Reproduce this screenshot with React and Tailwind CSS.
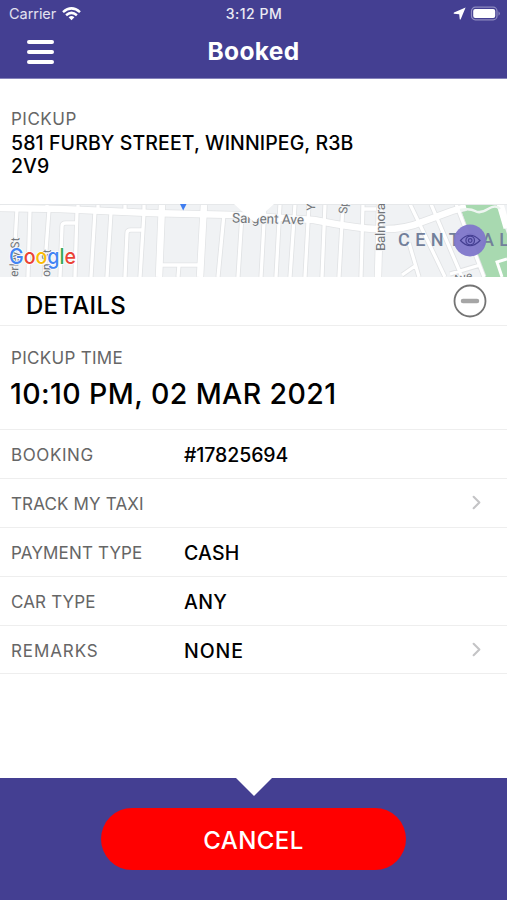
import React from 'react';
import { ChevronRight } from 'lucide-react';

const ROWS = [
    { label: 'BOOKING', value: '#17825694', labelClass: 'tracking-[0.6px]', valueClass: 'tracking-[-0.1px]' },
    { label: 'TRACK MY TAXI', arrow: true, labelClass: 'tracking-[0.15px]' },
    { label: 'PAYMENT TYPE', value: 'CASH', labelClass: 'tracking-[0.15px]', valueClass: 'tracking-[0.2px]' },
    { label: 'CAR TYPE', value: 'ANY', labelClass: 'tracking-[0.15px]', valueClass: 'tracking-[0.3px]' },
    { label: 'REMARKS', value: 'NONE', arrow: true, labelClass: 'tracking-[0.9px]', valueClass: 'tracking-[0.9px]' },
];

// Narrow lanes and side streets
const LANES = [
    'M17 5 L13 73', 'M30 5 L28 73', 'M49 6 L44 73', 'M77 7 L75 73', 'M95 7 L91 73',
    'M111 8 L107 73', 'M144 9 L140 73', 'M224 10 L218 73', 'M242 10 L238 73',
    'M60 73 L62 22 Q62 19 66 19 L76 19', 'M125 73 L127 29 Q127 26 131 26 L142 26',
    'M47 0 V5', 'M78 0 V6', 'M98 0 V7', 'M125 0 V8', 'M144 0 V8',
    'M160 61 H201', 'M179 61 L178 73',
    'M265 0 L261 73', 'M280 0 L276 73', 'M295 0 L290 73', 'M309 0 L305 73',
    'M325 0 L322 73', 'M343 0 L339 73', 'M363 0 L361 73',
    'M363 5 H376', 'M410 0 L445 73', 'M431 0 L462 73', 'M456 0 L484 73',
    'M409 39 L419 73', 'M402 71 L415 62', 'M450 70 L480 61',
];

const MAIN_STREETS = [
    'M162 0 L159 73', 'M204 0 L200 73', 'M380 0 L378 73',
];

const AVENUE = 'M0 4 L60 5 L150 9 L235 11 L314 16 Q360 25 378 25 Q404 26 422 18 L452 7 L466 3';

const Header = () => (
    <header className="h-[79px] bg-[#443f92] text-white shrink-0 border-b border-[#8582ba]">
        <div className="h-[27px] grid grid-cols-3 items-center pl-[9px] pr-[6px] text-[14.5px]">
            <div className="flex items-center gap-[6px] text-white/85">
                <span className="tracking-[-0.05px]">Carrier</span>
                <svg width="19" height="14" viewBox="0 0 19 14" fill="none" stroke="white" strokeWidth="2.5">
                    <path d="M1 5.1 Q9.5 -2.3 18 5.1" />
                    <path d="M4.1 8.2 Q9.5 3.5 14.9 8.2" />
                    <path d="M6.6 10.2 Q9.5 7.9 12.4 10.2 L9.5 13.3 Z" fill="white" stroke="none" />
                </svg>
            </div>
            <span className="-ml-[2px] text-center text-[14px] font-medium tracking-[0.5px] text-white/90 whitespace-nowrap">3:12 PM</span>
            <div className="flex items-center justify-end gap-[4px]">
                <svg width="13" height="13" viewBox="0 0 13 13" fill="white">
                    <path d="M12.6 0.6 L7.6 12.4 Q6.900 12.800 6.700 12 L6.200 7.300 L1 6.700 Q0.100 6.300 1 5.600 Z" />
                </svg>
                <svg width="31" height="15" viewBox="0 0 31 15">
                    <rect x="1.5" y="1.2" width="25.5" height="12.6" rx="3.8" fill="none" stroke="#8e8bc0" strokeWidth="1.2" />
                    <rect x="3.2" y="3" width="22" height="9" rx="2" fill="white" />
                    <path d="M28.5 5.2 Q31.2 7.5 28.5 9.8 Z" fill="#8e8bc0" />
                </svg>
            </div>
        </div>
        <div className="h-[50px] grid grid-cols-3 items-center">
            <button className="ml-[27px] flex w-[27px] flex-col gap-[6px]" aria-label="Menu">
                <span className="h-[4px] w-full rounded-full bg-white"></span>
                <span className="h-[4px] w-full rounded-full bg-white"></span>
                <span className="h-[4px] w-full rounded-full bg-white"></span>
            </button>
            <h1 className="-mt-[2px] text-center text-[24.5px] font-bold tracking-[0.3px] leading-none">Booked</h1>
        </div>
    </header>
);

const PickupMap = () => (
    <div className="h-[73px] shrink-0">
        <svg className="block" width="507" height="73" viewBox="0 0 507 73" fontFamily="Roboto, sans-serif">
            <rect width="507" height="73" fill="#f0f2f4" />
            <path d="M459 0 H497 L507 30 V73 H485 L472 38 Z" fill="#a8d9b0" />
            <g fill="none" stroke="#e1e3e5">
                <path d={LANES.join(' ')} strokeWidth="5" />
                <path d={MAIN_STREETS.join(' ')} strokeWidth="8" />
                <path d={AVENUE} strokeWidth="8" />
            </g>
            <g fill="none" stroke="#ffffff">
                <path d={LANES.join(' ')} strokeWidth="3.300" />
                <path d={MAIN_STREETS.join(' ')} strokeWidth="6.500" />
                <path d={AVENUE} strokeWidth="6.500" />
                <path d="M500 0 L507 24" strokeWidth="7" />
                <path d="M507 55 L497 58 L502 73" strokeWidth="3" />
            </g>
            <path d="M460 6 Q470 4 475 7 T488 5 T500 5" fill="none" stroke="#eef5f1" strokeWidth="2.500" />
            <path d="M0 .5 H507" stroke="#e6e8ea" />
            <g fill="#717579" stroke="#f3f4f5" strokeWidth="1.500" paintOrder="stroke">
                <text x="232" y="18.500" fontSize="13.500" textLength="72" transform="rotate(1.5 232 18.500)">Sargent Ave</text>
                <text transform="translate(385 47) rotate(-90)" fontSize="13.500" textLength="48">Balmora</text>
                <text transform="translate(315 7) rotate(-88)" fontSize="12">Y</text>
                <text transform="translate(347 10) rotate(-86)" fontSize="12">Sp</text>
                <text transform="translate(454 80) rotate(-14)" fontSize="12">Ave</text>
                <text transform="translate(18 73) rotate(-88)" fontSize="12">erley St</text>
                <text transform="translate(50 73) rotate(-88)" fontSize="12">on St</text>
            </g>
            <text x="398" y="42" fontSize="18" fontWeight="500" fill="#72809a" textLength="111">CENTRAL</text>
            <path d="M180 0 H186.500 L183.200 6.500 Z" fill="#3f7df0" />
            <path d="M234 0 H274 L254 18 Z" fill="#ffffff" />
            <text x="9" y="59.500" fontFamily="Inter, sans-serif" fontWeight="500" fontSize="21.500" textLength="67" lengthAdjust="spacingAndGlyphs" stroke="#ffffff" strokeWidth="1.500" paintOrder="stroke">
                <tspan fill="#4285f4">G</tspan>
                <tspan fill="#ea4335">o</tspan>
                <tspan fill="#fbbc05">o</tspan>
                <tspan fill="#4285f4">g</tspan>
                <tspan fill="#34a853">l</tspan>
                <tspan fill="#ea4335">e</tspan>
            </text>
            <circle cx="470" cy="36.500" r="16" fill="#8078cb" fillOpacity="0.96" />
            <g fill="none" stroke="#443f92" strokeWidth="1.200">
                <path d="M460.500 36.500 Q470 26 480 36.500 Q470 47 460.500 36.500 Z" />
                <circle cx="470.200" cy="36.500" r="4.300" />
                <circle cx="470.200" cy="36.500" r="1.800" />
            </g>
        </svg>
    </div>
);

const DetailRow = ({ label, value, arrow, labelClass, valueClass }) => (
    <div className="flex h-[48.9px] items-center border-b border-[#eeeeee] pl-[11px] pr-[19px] pt-[4px]">
        <span className={`w-[173px] text-[17px] text-[#666666] ${labelClass}`}>{label}</span>
        <span className={`flex-1 text-[19.5px] font-medium text-black ${valueClass ?? ''}`}>{value}</span>
        {arrow && <ChevronRight className="h-[23px] w-[23px] -mt-[4px] text-[#c4c4c6]" strokeWidth={2.2} />}
    </div>
);

const App = () => {
    return (
        <div className="flex h-[900px] w-[507px] flex-col overflow-hidden bg-white font-['Inter',sans-serif]">
            <Header />

            <section className="h-[125px] shrink-0 pl-[11px] pt-[30px]">
                <p className="text-[17px] leading-[21px] text-[#666666] tracking-[0.5px]">PICKUP</p>
                <p className="mt-[2px] text-[19.5px] font-medium leading-[23px] text-black tracking-[0.1px]">
                    581 FURBY STREET, WINNIPEG, R3B
                    <br />
                    2V9
                </p>
            </section>

            <PickupMap />

            <section className="flex h-[49px] shrink-0 items-center justify-between border-b border-[#eeeeee] pl-[26px] pr-[20px]">
                <h2 className="pt-[9px] text-[24px] font-medium text-black tracking-[0.3px]">DETAILS</h2>
                <svg width="34" height="34" viewBox="0 0 34 34" fill="none">
                    <circle cx="17" cy="17" r="15.500" stroke="#747474" strokeWidth="1.800" />
                    <path d="M10 17 H24" stroke="#a6a6a6" strokeWidth="4.500" strokeLinecap="round" />
                </svg>
            </section>

            <section className="h-[104px] shrink-0 border-b border-[#eeeeee] pl-[11px] pt-[22px]">
                <p className="text-[17px] leading-[21px] text-[#666666] tracking-[0.3px]">PICKUP TIME</p>
                <p className="-ml-[1px] mt-[7px] text-[28.5px] font-medium leading-[36px] text-black tracking-[0.4px]">10:10 PM, 02 MAR 2021</p>
            </section>

            <section className="shrink-0">
                {ROWS.map((row) => (
                    <DetailRow key={row.label} {...row} />
                ))}
            </section>

            <footer className="mt-auto flex h-[122px] shrink-0 flex-col items-center bg-[#443f92]">
                <svg width="36" height="18" viewBox="0 0 36 18" fill="white">
                    <path d="M0 0 H36 L18 18 Z" />
                </svg>
                <button className="mt-[12px] h-[62px] w-[305px] rounded-full bg-[#ff0000] pt-[3px] text-[24px] font-medium text-white tracking-[0.4px]">
                    CANCEL
                </button>
            </footer>
        </div>
    );
};

export default App;
